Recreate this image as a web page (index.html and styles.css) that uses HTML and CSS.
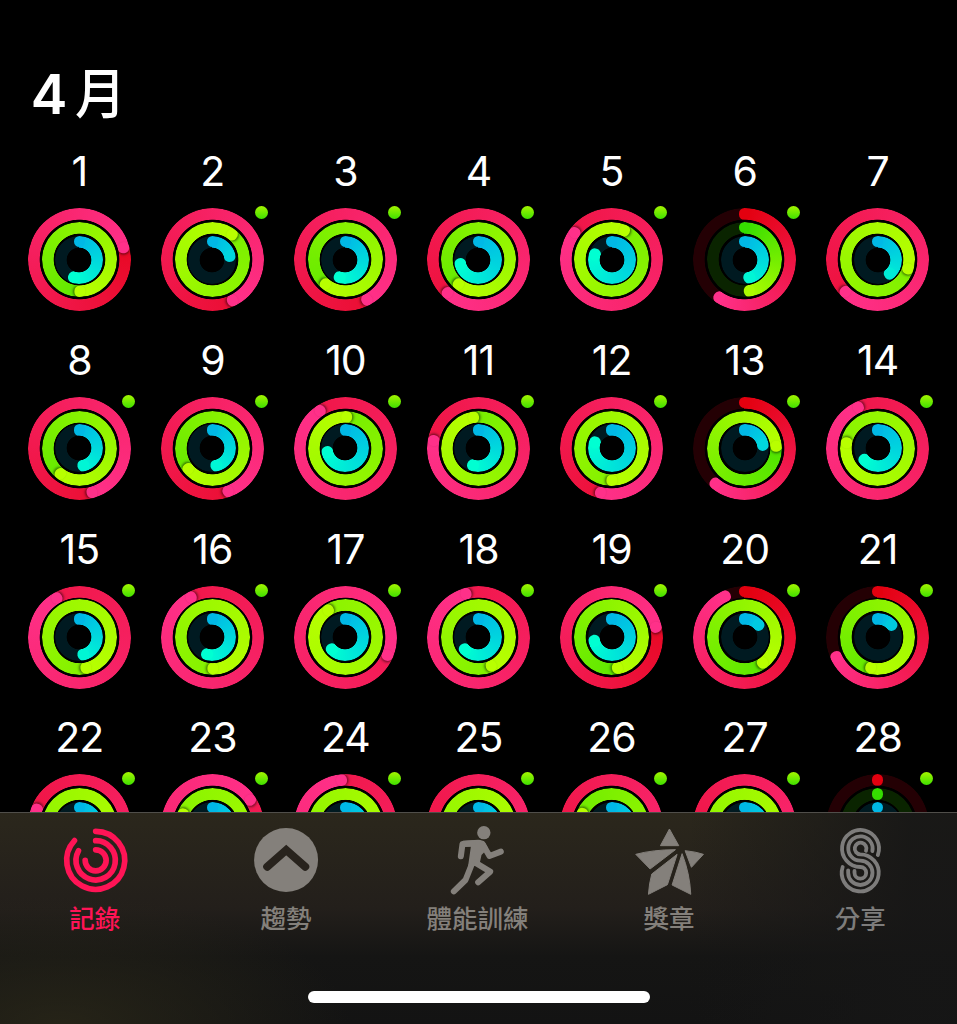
FILE: index.html
```
<!DOCTYPE html>
<html lang="zh-Hant">
<head>
	<meta charset="utf-8">
	<meta name="viewport" content="width=device-width, initial-scale=1">
	<title>健身記錄</title>
	<link rel="stylesheet" href="styles.css">
</head>
<body>
	<div class="screen">
		<main class="calendar">
			<h1 class="month"><span class="month-num">4</span><span class="month-unit">月</span></h1>
			<div class="days" id="days"></div>
		</main>

		<nav class="tabbar">
			<div class="tabs">
				<a class="tab active">
					<svg class="icon" viewBox="47 60 240 216">
						<g class="line" stroke-width="17">
							<path d="M166 79A87 87 0 1 1 102.4 106.7"/>
							<path d="M166 107A59 59 0 1 1 114.4 137.4"/>
							<path d="M166 134.5A31.500 31.500 0 1 1 134.5 166"/>
						</g>
					</svg>
					<span>記錄</span>
				</a>
				<a class="tab">
					<svg class="icon" viewBox="621.300 60 240 216">
						<circle cx="738.500" cy="165" r="96"/>
						<path class="chevron" d="M682 185L739 135L796 185"/>
					</svg>
					<span>趨勢</span>
				</a>
				<a class="tab">
					<svg class="icon" viewBox="115.500 60 240 216">
						<circle cx="253" cy="83" r="20"/>
						<path d="M190 107L236 104Q251 104 258 115L266 130L246 150L240 178L205 189L214 125L190 126Z"/>
						<g class="line" stroke-width="18">
							<path d="M184 154L189 117L220 115"/>
							<path d="M249 117L270 153L304 140"/>
							<path d="M226 172L272 200L236 232"/>
							<path d="M216 180L198 225L163 259"/>
						</g>
					</svg>
					<span>體能訓練</span>
				</a>
				<a class="tab">
					<svg class="icon star" viewBox="689.700 60 240 216">
						<path d="M808 72L836 122L781 122Z"/>
						<path d="M707 148Q760 134 826 134L750 192Z"/>
						<path d="M831 148L755 207Q747 236 745 268L802 239Z"/>
						<path d="M846 146L816 240L872 268Q869 205 846 146Z"/>
						<path d="M855 137Q886 140 910 148L874 187Z"/>
					</svg>
					<span>獎章</span>
				</a>
				<a class="tab">
					<svg class="icon" viewBox="64 60 240 216">
						<g class="line" stroke-width="11.500">
							<path d="M234.500 150A55.500 55.500 0 1 0 182 186A17.500 17.500 0 1 1 164.500 203.500V198"/>
							<path d="M218 138A36.500 36.500 0 1 0 182 167A36.500 36.500 0 1 1 145.500 203.500V196"/>
							<path d="M199 137A17.500 17.500 0 1 0 182 148A55.500 55.500 0 1 1 129 186"/>
						</g>
					</svg>
					<span>分享</span>
				</a>
			</div>
			<div class="home-indicator"></div>
		</nav>
	</div>

	<script src="rings.js"></script>
</body>
</html>
```
FILE: styles.css
```
*{
	box-sizing: border-box;
}
body{
	margin: 0;
	background: #000;
	color: #fff;
	font-family: Inter, "Noto Sans CJK TC", sans-serif;
}
.screen{
	height: 1024px;
	overflow: hidden;
	display: grid;
	grid-template-rows: 812px 212px;
}

/* calendar */
.calendar{
	overflow: hidden;
	padding: 60px 12.8px 0;
}
.month{
	margin: 0 0 20px;
	padding-left: 18px;
	height: 70px;
	line-height: 69px;
	font-size: 54px;
	font-weight: 500;
	display: flex;
	gap: 8px;
}
.month-num{
	font-size: 55px;
	font-weight: 600;
}
.month-unit{
	transform: scaleX(0.94);
	transform-origin: left;
}
.days{
	display: grid;
	grid-template-columns: repeat(7, 1fr);
	grid-auto-rows: 188.8px;
}
.day{
	display: flex;
	flex-direction: column;
	align-items: center;
}
.date{
	height: 42px;
	line-height: 42px;
	margin-bottom: 16px;
	font-size: 41px;
	letter-spacing: -1px;
}
.rings{
	position: relative;
	width: 103px;
	height: 103px;
	display: grid;
	place-items: center;
}
.dot{
	position: absolute;
	top: -2px;
	right: -4px;
	width: 13px;
	height: 13px;
	border-radius: 50%;
	background: linear-gradient(#a4f500, #3fe000);
}
.ring{
	grid-area: 1 / 1;
	position: relative;
	border-radius: 50%;
	-webkit-mask: radial-gradient(closest-side, transparent calc(100% - 12px), #000 calc(100% - 11.3px));
	mask: radial-gradient(closest-side, transparent calc(100% - 12px), #000 calc(100% - 11.3px));
}
.ring.move{
	width: 103px;
	height: 103px;
}
.ring.exercise{
	width: 75.4px;
	height: 75.4px;
}
.ring.stand{
	width: 48px;
	height: 48px;
}
.arm{
	position: absolute;
	inset: 0;
}
.arm::before{
	content: "";
	position: absolute;
	top: 0;
	left: 50%;
	width: 11.6px;
	height: 11.6px;
	margin-left: -5.8px;
	border-radius: 50%;
	background: var(--cap);
}
.arm.over::before{
	box-shadow: 1.5px 0 2.5px rgba(0,0,0,0.5);
}

/* tab bar */
.tabbar{
	border-top: 1px solid #504e4a;
	background:
		radial-gradient(ellipse 290px 130px at 60px 212px, rgba(44,41,25,0.75), transparent),
		linear-gradient(90deg, transparent 72%, rgba(22,22,22,0.85) 95%),
		linear-gradient(#2b271c, #231f1b 45%, #151514 68%, #131313);
	display: flex;
	flex-direction: column;
	align-items: center;
	justify-content: space-between;
	padding: 12px 0 21px;
}
.tabs{
	display: grid;
	grid-template-columns: repeat(5, 1fr);
	width: 100%;
}
.tab{
	display: flex;
	flex-direction: column;
	align-items: center;
	color: #84807b;
	font-family: "Noto Sans CJK TC", sans-serif;
	font-size: 25.5px;
	font-weight: 500;
	line-height: 36px;
}
.tab.active{
	color: #ff1456;
}
.tab:last-child{
	color: #7d7c7b;
}
.tab span{
	margin-top: 2px;
	padding-right: 2px;
}
.icon{
	width: 80px;
	height: 72px;
	fill: currentColor;
}
.line{
	fill: none;
	stroke: currentColor;
	stroke-linecap: round;
	stroke-linejoin: round;
}
.chevron{
	fill: none;
	stroke: #28231d;
	stroke-width: 24;
	stroke-linecap: round;
}
.star{
	stroke: currentColor;
	stroke-width: 3;
	stroke-linejoin: round;
}
.home-indicator{
	width: 342px;
	height: 12px;
	border-radius: 6px;
	background: #fff;
}
```
FILE: rings.js
```
// 每天: [活動, 運動, 站立] 的角度, 超過 360 表示多圈
var days = [
	[435, 540, 196], [514, 758, 77], [512, 580, 197], [583, 580, 257], [666, 744, 288], [214, 172, 166], [585, 827, 139],
	[524, 578, 166], [520, 591, 166], [686, 722, 257], [640, 711, 196], [554, 900, 288], [220, 446, 80], [695, 1001, 229],
	[690, 889, 166], [692, 900, 196], [833, 1047, 227], [704, 877, 227], [437, 530, 258], [335, 506, 48], [245, 553, 48],
	[651, 890, 160], [776, 1012, 160], [715, 900, 160], [590, 870, 160], [590, 653, 160], [590, 900, 160], [0, 0, 0]
];
// 沒有體能訓練圓點的日子
var noDot = [1, 7];

var kinds = [
	{name: 'move', from: [227, 0, 15], to: [255, 48, 137], track: '#240004'},
	{name: 'exercise', from: [53, 221, 0], to: [184, 255, 0], track: '#0a2400'},
	{name: 'stand', from: [0, 184, 230], to: [0, 255, 210], track: '#001a21'}
];

function mix(kind, t){
	var rgb = kind.from.map(function(v, i){
		return Math.round(v + (kind.to[i] - v) * t);
	});
	return 'rgb(' + rgb.join(',') + ')';
}

function arm(angle, color, over){
	return '<div class="arm' + (over ? ' over' : '') + '" style="transform:rotate(' + angle + 'deg);--cap:' + color + '"></div>';
}

function ring(kind, total){
	// 進度不到半圈時漸層還沒走完
	var end = mix(kind, Math.min(1, total / 190)), bg, arms;
	if(total > 360){
		// 只畫最後一圈
		bg = 'conic-gradient(from ' + (total % 360) + 'deg,' + mix(kind, (total - 360) / total) + ',' + end + ')';
		arms = arm(total % 360, end, true);
	}else{
		bg = 'conic-gradient(' + mix(kind, 0) + ',' + end + ' ' + total + 'deg,' + kind.track + ' ' + total + 'deg)';
		arms = arm(0, mix(kind, 0)) + (total ? arm(total, end) : '');
	}
	if(!total){
		bg = kind.track;
	}
	return '<div class="ring ' + kind.name + '" style="background:' + bg + '">' + arms + '</div>';
}

document.getElementById('days').innerHTML = days.map(function(day, i){
	var rings = kinds.map(function(kind, k){
		return ring(kind, day[k]);
	}).join('');
	var dot = noDot.indexOf(i + 1) < 0 ? '<i class="dot"></i>' : '';
	return '<div class="day"><span class="date">' + (i + 1) + '</span><div class="rings">' + rings + dot + '</div></div>';
}).join('');
```
